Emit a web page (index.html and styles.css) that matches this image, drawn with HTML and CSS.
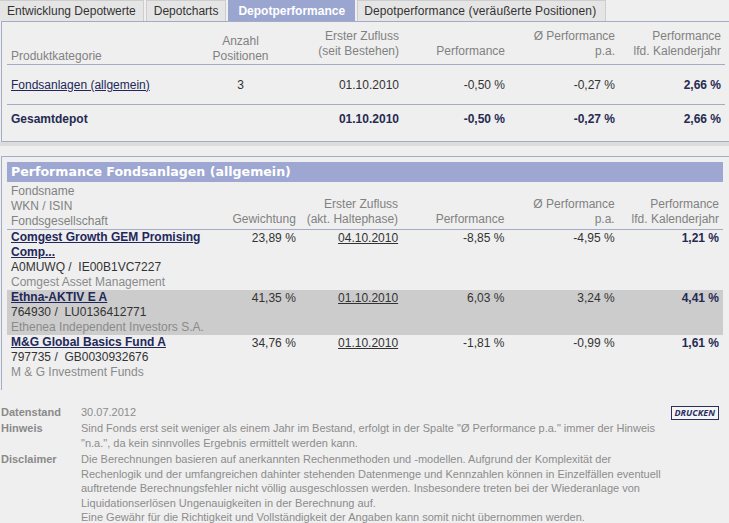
FILE: index.html
```html
<!DOCTYPE html>
<html lang="de">
<head>
<meta charset="utf-8">
<title>Depotperformance</title>
<link rel="stylesheet" href="styles.css">
</head>
<body>
<nav class="tabs">
  <span class="tab">Entwicklung Depotwerte</span>
  <span class="tab">Depotcharts</span>
  <span class="tab tab-active">Depotperformance</span>
  <span class="tab tab-wide">Depotperformance (veräußerte Positionen)</span>
</nav>

<section class="panel panel-summary">
  <table class="grid summary">
    <colgroup>
      <col class="c-s1"><col class="c-s2"><col class="c-3"><col class="c-4"><col class="c-5"><col class="c-6">
    </colgroup>
    <thead>
      <tr>
        <th class="left">Produktkategorie</th>
        <th class="center">Anzahl<br>Positionen</th>
        <th>Erster Zufluss<br>(seit Bestehen)</th>
        <th>Performance</th>
        <th>Ø Performance<br>p.a.</th>
        <th>Performance<br>lfd. Kalenderjahr</th>
      </tr>
    </thead>
    <tbody>
      <tr class="row-cat">
        <td class="left"><a class="link" href="#">Fondsanlagen (allgemein)</a></td>
        <td class="center">3</td>
        <td>01.10.2010</td>
        <td>-0,50 %</td>
        <td>-0,27 %</td>
        <td class="strong">2,66 %</td>
      </tr>
      <tr class="row-total">
        <td class="left strong">Gesamtdepot</td>
        <td></td>
        <td class="strong">01.10.2010</td>
        <td class="strong">-0,50 %</td>
        <td class="strong">-0,27 %</td>
        <td class="strong">2,66 %</td>
      </tr>
    </tbody>
  </table>
</section>
<div class="band"></div>

<section class="panel panel-funds">
  <h2 class="title">Performance Fondsanlagen (allgemein)</h2>
  <table class="grid funds">
    <colgroup>
      <col class="c-f1"><col class="c-f2"><col class="c-3"><col class="c-4"><col class="c-5"><col class="c-6">
    </colgroup>
    <thead>
      <tr>
        <th class="left">Fondsname<br>WKN / ISIN<br>Fondsgesellschaft</th>
        <th>Gewichtung</th>
        <th>Erster Zufluss<br>(akt. Haltephase)</th>
        <th>Performance</th>
        <th>Ø Performance<br>p.a.</th>
        <th>Performance<br>lfd. Kalenderjahr</th>
      </tr>
    </thead>
    <tbody>
      <tr>
        <td class="left"><a class="fund" href="#">Comgest Growth GEM Promising Comp...</a><span class="ids">A0MUWQ / &nbsp;IE00B1VC7227</span><span class="company">Comgest Asset Management</span></td>
        <td>23,89 %</td>
        <td><a class="date" href="#">04.10.2010</a></td>
        <td>-8,85 %</td>
        <td>-4,95 %</td>
        <td class="strong">1,21 %</td>
      </tr>
      <tr class="hl">
        <td class="left"><a class="fund" href="#">Ethna-AKTIV E A</a><span class="ids">764930 / &nbsp;LU0136412771</span><span class="company">Ethenea Independent Investors S.A.</span></td>
        <td>41,35 %</td>
        <td><a class="date" href="#">01.10.2010</a></td>
        <td>6,03 %</td>
        <td>3,24 %</td>
        <td class="strong">4,41 %</td>
      </tr>
      <tr>
        <td class="left"><a class="fund" href="#">M&amp;G Global Basics Fund A</a><span class="ids">797735 / &nbsp;GB0030932676</span><span class="company">M &amp; G Investment Funds</span></td>
        <td>34,76 %</td>
        <td><a class="date" href="#">01.10.2010</a></td>
        <td>-1,81 %</td>
        <td>-0,99 %</td>
        <td class="strong">1,61 %</td>
      </tr>
    </tbody>
  </table>
</section>

<section class="info">
  <dl class="notes">
    <dt>Datenstand</dt>
    <dd>30.07.2012</dd>
    <dt>Hinweis</dt>
    <dd>Sind Fonds erst seit weniger als einem Jahr im Bestand, erfolgt in der Spalte "Ø Performance p.a." immer der Hinweis<br>"n.a.", da kein sinnvolles Ergebnis ermittelt werden kann.</dd>
    <dt>Disclaimer</dt>
    <dd>Die Berechnungen basieren auf anerkannten Rechenmethoden und -modellen. Aufgrund der Komplexität der<br>Rechenlogik und der umfangreichen dahinter stehenden Datenmenge und Kennzahlen können in Einzelfällen eventuell<br>auftretende Berechnungsfehler nicht völlig ausgeschlossen werden. Insbesondere treten bei der Wiederanlage von<br>Liquidationserlösen Ungenauigkeiten in der Berechnung auf.<br>Eine Gewähr für die Richtigkeit und Vollständigkeit der Angaben kann somit nicht übernommen werden.</dd>
  </dl>
  <button class="print" type="button">DRUCKEN</button>
</section>
</body>
</html>
```

FILE: styles.css
```css
html, body {
  margin: 0;
  padding: 0;
  background: #efefef;
}
body {
  font-family: "Liberation Sans", Arial, sans-serif;
  font-size: 12px;
  color: #333333;
  width: 729px;
  overflow: hidden;
}

/* Tabs */
.tabs {
  display: flex;
  gap: 2px;
  height: 21px;
}
.tab {
  display: block;
  height: 20px;
  line-height: 20px;
  padding: 0 7px;
  background: #e5e5e5;
  border: 1px solid #cdcdcd;
  border-bottom: none;
  color: #333333;
  white-space: nowrap;
}
.tab:first-child {
  border-left: none;
  padding-left: 7px;
}
.tab-active {
  background: #9ba6d0;
  border-color: #9ba6d0;
  color: #ffffff;
  font-weight: bold;
  padding: 0 9px 0 9px;
}
.tab-wide {
  padding: 0 9px 0 6px;
  letter-spacing: 0.1px;
}

/* Panels */
.panel {
  margin-left: 1px;
  border-left: 1px solid #a4abc4;
  border-top: 1px solid #a4abc4;
}
.panel-summary {
  border-bottom: 1px solid #a4abc4;
  padding: 0 0 7px 5px;
}
.band {
  height: 4px;
  background: #dcdcdc;
  margin-bottom: 10px;
}
.panel-funds {
  padding: 5px 0 10px 5px;
}
.title {
  margin: 0 0 2px 0;
  width: 712px;
  height: 20px;
  line-height: 20px;
  padding-left: 4px;
  background: #9da7d1;
  color: #ffffff;
  font-size: 12.6px;
  font-weight: bold;
  font-family: "DejaVu Sans", Verdana, sans-serif;
}

/* Tables */
.grid {
  border-collapse: collapse;
  table-layout: fixed;
  width: 716px;
}
.c-s1 { width: 198px; }
.c-s2 { width: 71px; }
.c-f1 { width: 196px; }
.c-f2 { width: 96px; }
.c-3 { width: 102px; }
.c-4 { width: 106px; }
.c-5 { width: 110px; }
.c-6 { width: 104px; }
.summary .c-3 { width: 127px; }
.summary .c-6 { width: 106px; }

.grid th {
  font-weight: normal;
  color: #818181;
  text-align: right;
  vertical-align: bottom;
  line-height: 15px;
  padding: 0 4px 0 0;
  white-space: nowrap;
}
.grid td {
  text-align: right;
  padding: 0 4px 0 0;
  white-space: nowrap;
}
.grid th.left, .grid td.left {
  text-align: left;
  padding: 0 0 0 4px;
}
.grid .center {
  text-align: center;
  padding: 0;
}
.grid .strong {
  font-weight: bold;
  color: #262a52;
}

.summary thead tr {
  border-bottom: 1px solid #a4abc4;
}
.summary th {
  height: 33px;
  padding-top: 4px;
  padding-bottom: 5px;
}
.summary .row-cat {
  height: 40px;
  border-bottom: 1px solid #a4abc4;
}
.summary .row-total {
  height: 29px;
}
.summary td { vertical-align: middle; }

.link {
  color: #22275a;
  text-decoration: underline;
}

.funds thead tr {
  border-bottom: 1px solid #a4abc4;
}
.funds th {
  padding-bottom: 2px;
}
.funds td {
  vertical-align: top;
  line-height: 15px;
  padding-top: 1px;
}
.funds tbody tr.hl td {
  background: #cccccc;
}
.funds td.left {
  white-space: normal;
}
.fund {
  display: block;
  color: #22275a;
  font-weight: bold;
  text-decoration: underline;
  width: 190px;
}
.ids {
  display: block;
  color: #333333;
  white-space: nowrap;
}
.company {
  display: block;
  color: #8a8a8a;
  white-space: nowrap;
}
.date {
  color: #333333;
  text-decoration: underline;
}

/* Info */
.info {
  display: flex;
  justify-content: space-between;
  align-items: flex-start;
  margin-top: 15px;
  font-size: 11px;
}
.notes {
  margin: 0;
  display: grid;
  grid-template-columns: 81px auto;
  row-gap: 2px;
  line-height: 14.5px;
  color: #8c8c8c;
}
.notes dt {
  font-weight: bold;
  color: #8a8a8a;
  padding-left: 1px;
}
.notes dd {
  margin: 0;
  white-space: nowrap;
}
.print {
  margin: 1px 10px 0 0;
  padding: 0 3px;
  height: 14px;
  line-height: 12px;
  border: 1px solid #2b2f60;
  background: #f5f5f5;
  color: #2b2f60;
  font-family: "Open Sans", "Liberation Sans", sans-serif;
  font-size: 9px;
  font-style: italic;
  font-weight: bold;
}
```
